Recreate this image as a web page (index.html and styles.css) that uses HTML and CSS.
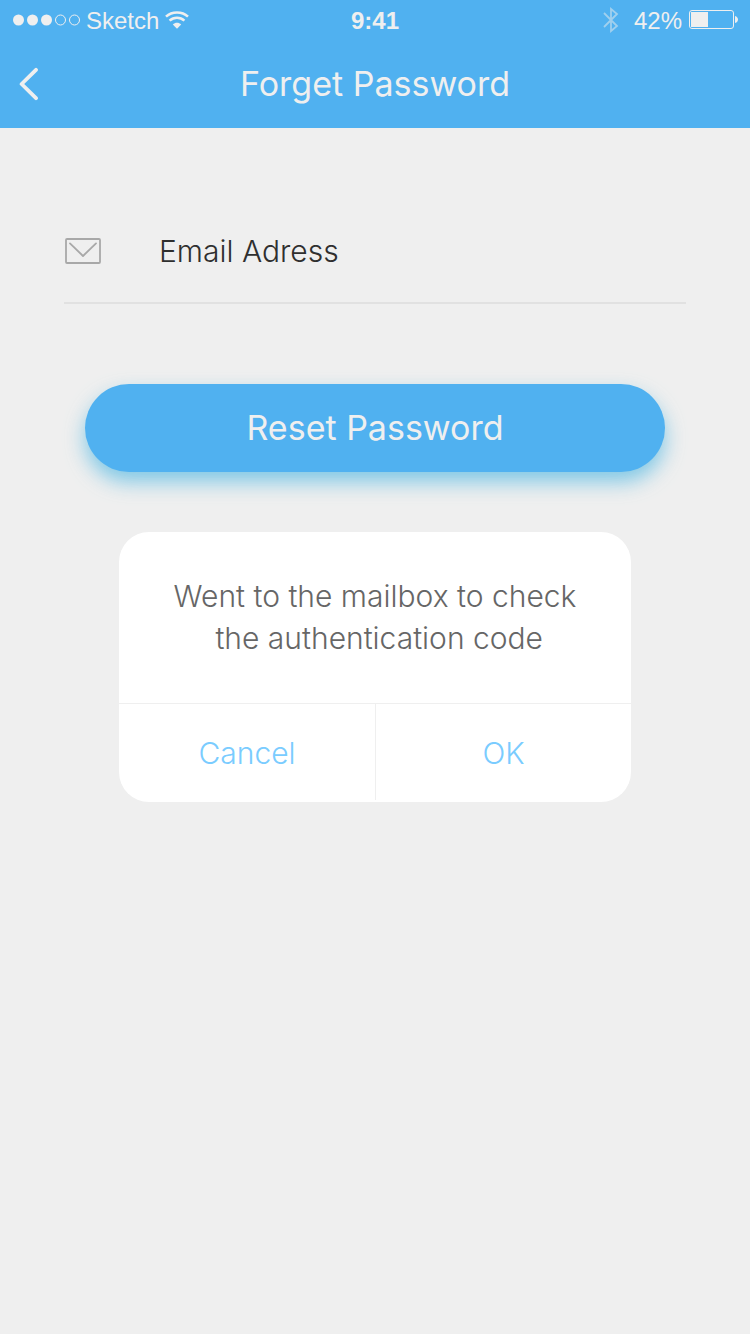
FILE: index.html
```html
<!DOCTYPE html>
<html lang="en">
<head>
  <meta charset="utf-8">
  <meta name="viewport" content="width=device-width, initial-scale=1">
  <title>Forget Password</title>
  <link rel="stylesheet" href="styles.css">
</head>
<body>
  <header class="header">
    <div class="status">
      <div class="status-left">
        <svg width="68" height="12" viewBox="0 0 68 12" aria-hidden="true">
          <g fill="#efefef"><circle cx="6.5" cy="6" r="5.5"/><circle cx="20.5" cy="6" r="5.5"/><circle cx="34.5" cy="6" r="5.5"/></g>
          <g fill="none" stroke="#efefef"><circle cx="48.5" cy="6" r="5"/><circle cx="62.5" cy="6" r="5"/></g>
        </svg>
        <span class="carrier">Sketch</span>
        <svg width="24" height="18" viewBox="0 0 24 18" aria-hidden="true">
          <g fill="none" stroke="#efefef" stroke-width="2.6">
            <path d="M1 5.6C7 .1 17 .1 23 5.6"/>
            <path d="M4.6 9.6c4.2-3.8 10.6-3.8 14.8 0"/>
          </g>
          <path d="M7.8 13.4c2.4-2.2 6-2.2 8.4 0L12 17.8z" fill="#efefef"/>
        </svg>
      </div>
      <span class="time">9:41</span>
      <div class="status-right">
        <svg width="16" height="26" viewBox="0 0 16 26" fill="none" stroke="#a0d0ee" stroke-width="1.8" aria-hidden="true">
          <path d="M1 6l13 13-6 5V2l6 5L1 20"/>
        </svg>
        <span class="percent">42%</span>
        <svg width="49" height="20" viewBox="0 0 49 20" aria-hidden="true">
          <rect x=".5" y=".5" width="44" height="18" rx="2.5" fill="none" stroke="#efefef"/>
          <path d="M2 2h17v15H2z" fill="#efefef"/>
          <path d="M46 6c4 1 4 6 0 7z" fill="#efefef"/>
        </svg>
      </div>
    </div>
    <nav class="nav">
      <button class="back" type="button" aria-label="Back">
        <svg width="20" height="34" viewBox="0 0 20 34" fill="none" stroke="#efefef" stroke-width="3.8" stroke-linecap="round" stroke-linejoin="round" aria-hidden="true">
          <path d="M17 2.8L2.6 17 17 31.2"/>
        </svg>
      </button>
      <h1 class="title">Forget Password</h1>
    </nav>
  </header>
  <main class="content">
    <form class="form">
      <label class="field" for="email">
        <svg width="36" height="26" viewBox="0 0 36 26" fill="none" stroke="#a8a8a8" stroke-width="1.8" stroke-linecap="round" stroke-linejoin="round" aria-hidden="true">
          <rect x="1" y="1" width="34" height="24" rx="1"/>
          <path d="M5 5.4L18 18 31 5.4"/>
        </svg>
        <input class="input" id="email" type="email" placeholder="Email Adress" aria-label="Email Adress">
      </label>
      <button class="reset" type="button">Reset Password</button>
    </form>
    <section class="dialog" role="dialog" aria-labelledby="message">
      <p class="message" id="message">Went to the mailbox to check<br>&nbsp;the authentication code</p>
      <div class="actions">
        <button class="action" type="button">Cancel</button>
        <button class="action" type="button">OK</button>
      </div>
    </section>
  </main>
</body>
</html>
```

FILE: styles.css
```css
* {
  box-sizing: border-box;
}

body {
  margin: 0;
  min-height: 100vh;
  background: #efefef;
  font-family: Inter, "Liberation Sans", sans-serif;
}

button,
input {
  font: inherit;
  border: 0;
  background: none;
}

svg {
  display: block;
  flex: none;
}

.header {
  background: #50b1f0;
  color: #efefef;
}

.status {
  display: grid;
  grid-template-columns: 1fr auto 1fr;
  align-items: center;
  height: 40px;
  padding: 0 12px;
  font: 24px "Liberation Sans", Arial, sans-serif;
}

.status-left,
.status-right {
  display: flex;
  align-items: center;
  gap: 7px;
}

.status-left {
  gap: 6px;
}

.status-right {
  justify-content: flex-end;
}

.carrier,
.time,
.percent {
  padding-top: 1px;
}

.time {
  font-weight: bold;
}

.percent {
  margin-left: 8px;
}

.nav {
  display: grid;
  grid-template-columns: 60px 1fr 60px;
  align-items: center;
  height: 88px;
}

.back {
  display: flex;
  padding: 8px 0 8px 19px;
}

.title {
  margin: 0;
  font-size: 34px;
  font-weight: 400;
  line-height: 44px;
  text-align: center;
}

.content {
  padding: 72px 64px;
}

.field {
  display: flex;
  align-items: center;
  gap: 58px;
  height: 104px;
  padding-left: 1px;
  border-bottom: 2px solid #e1e1e1;
}

.input {
  flex: 1;
  min-width: 0;
  padding: 0;
  outline: 0;
  color: #2f2f2f;
  font-size: 30px;
  font-weight: 300;
}

.input::placeholder {
  color: #2f2f2f;
  opacity: 1;
}

.reset {
  display: block;
  width: calc(100% - 42px);
  height: 88px;
  margin: 80px auto 60px;
  padding: 0 0 2px;
  border-radius: 44px;
  background: #50b1f0;
  box-shadow: 0 10px 20px rgba(91, 187, 227, 0.75);
  color: #efefef;
  font-size: 34px;
}

.dialog {
  max-width: 512px;
  margin: 0 auto;
  overflow: hidden;
  border-radius: 30px;
  background: #fff;
}

.message {
  margin: 0;
  padding: 43px 48px 44px;
  color: #666;
  font-size: 30px;
  font-weight: 300;
  line-height: 42px;
  text-align: center;
}

.actions {
  display: grid;
  grid-template-columns: 1fr 1fr;
  padding-bottom: 2px;
  border-top: 1px solid #efefef;
}

.action {
  height: 96px;
  padding: 2px 6px 0;
  color: #7accff;
  font-size: 30px;
  font-weight: 300;
}

.action + .action {
  border-left: 1px solid #efefef;
}
```
